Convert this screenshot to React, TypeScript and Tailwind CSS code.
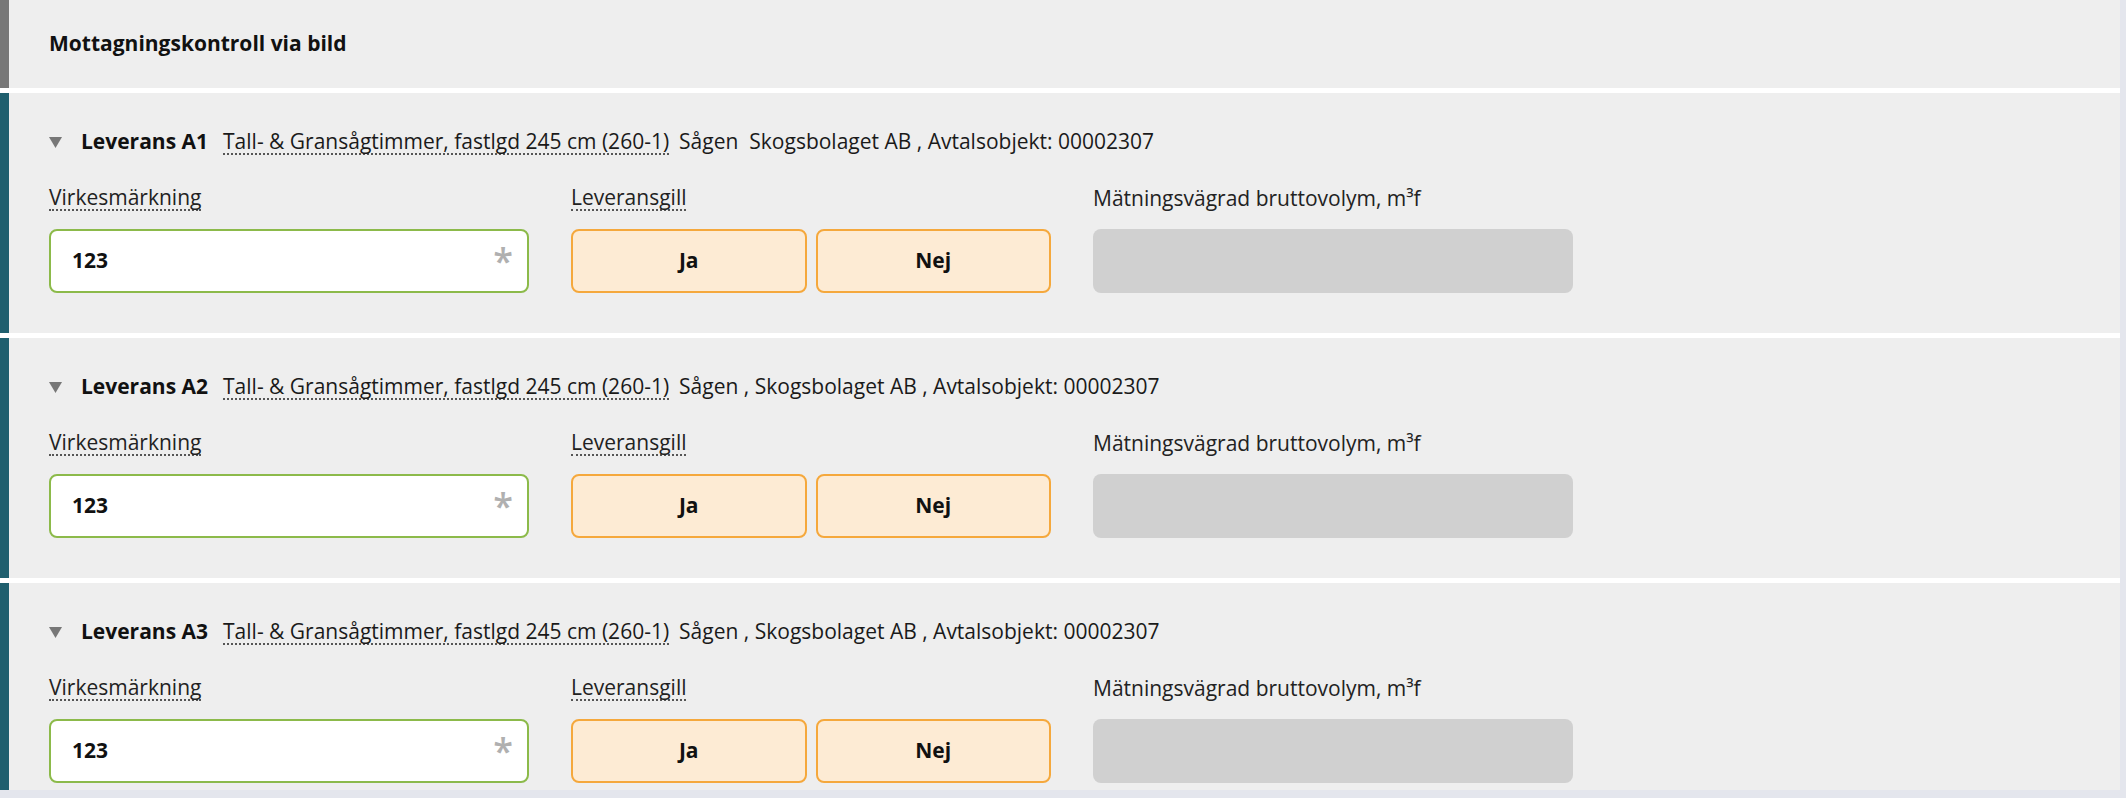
import React from "react";

const rows = [
  { id: "A1", sep: "  " },
  { id: "A2", sep: " , " },
  { id: "A3", sep: " , " },
];

function Section({ id, sep }: { id: string; sep: string }) {
  return (
    <div className="flex h-[240px] shrink-0 bg-[#eeeeee]">
      <div className="w-[9px] shrink-0 bg-[#1f5f6e]" />
      <div className="flex flex-col pl-[40px] pt-[36px]">
        <div className="flex h-[26px] items-center text-[21px] text-[#1a1a1a]">
          <svg width="13" height="11" viewBox="0 0 13 11" className="mr-[19px] shrink-0">
            <polygon points="0,0 13,0 6.5,11" fill="#777777" />
          </svg>
          <span className="mr-[15px] font-bold text-[#111]">Leverans {id}</span>
          <span className="mr-[10px] border-b-2 border-dotted border-[#555] leading-[24px]">
            Tall- &amp; Gransågtimmer, fastlgd 245 cm (260-1)
          </span>
          <span className="whitespace-pre">
            <span className="font-medium">Sågen</span>
            {sep}Skogsbolaget AB , Avtalsobjekt: 00002307
          </span>
        </div>
        <div className="mt-[30px] flex gap-[42px] text-[21px] text-[#222]">
          <div className="flex w-[480px] flex-col">
            <div className="flex h-[26px] items-center">
              <span className="border-b-2 border-dotted border-[#555] leading-[24px]">Virkesmärkning</span>
            </div>
            <div className="mt-[18px] flex h-[64px] items-center justify-between rounded-[8px] border-2 border-[#8cba4a] bg-white pl-[21px] pr-[14px]">
              <span className="font-bold text-[#111]">123</span>
              <span className="text-[36px] font-semibold leading-none text-[#b0b0b0]">*</span>
            </div>
          </div>
          <div className="flex w-[480px] flex-col">
            <div className="flex h-[26px] items-center">
              <span className="border-b-2 border-dotted border-[#555] leading-[24px]">Leveransgill</span>
            </div>
            <div className="mt-[18px] flex h-[64px] gap-[9px]">
              <button className="flex flex-1 items-center justify-center rounded-[8px] border-2 border-[#f5a83c] bg-[#fdebd4] font-bold text-[#111]">
                Ja
              </button>
              <button className="flex flex-1 items-center justify-center rounded-[8px] border-2 border-[#f5a83c] bg-[#fdebd4] font-bold text-[#111]">
                Nej
              </button>
            </div>
          </div>
          <div className="flex w-[480px] flex-col">
            <div className="flex h-[26px] items-center">
              <span className="leading-[24px]">Mätningsvägrad bruttovolym, m³f</span>
            </div>
            <div className="mt-[18px] h-[64px] rounded-[8px] bg-[#d0d0d0]" />
          </div>
        </div>
      </div>
    </div>
  );
}

export default function App() {
  return (
    <div
      className="h-[798px] w-full overflow-hidden bg-[#e4e6ed]"
      style={{ fontFamily: '"Open Sans", "Noto Sans", "Liberation Sans", sans-serif' }}
    >
      <div className="flex h-[790px] w-[2120px] flex-col gap-[5px] overflow-hidden bg-white">
        <div className="flex h-[88px] shrink-0 bg-[#eeeeee]">
          <div className="w-[9px] shrink-0 bg-[#777777]" />
          <div className="flex items-center pl-[40px] text-[21px] font-bold text-[#111]">
            Mottagningskontroll via bild
          </div>
        </div>
        {rows.map((r) => (
          <Section key={r.id} id={r.id} sep={r.sep} />
        ))}
      </div>
    </div>
  );
}
